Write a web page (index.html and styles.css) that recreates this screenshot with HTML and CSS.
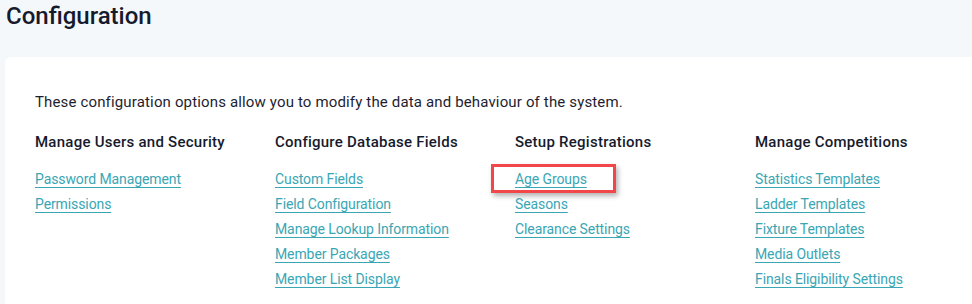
FILE: index.html
```html
<!DOCTYPE html>
<html>
<head>
<meta charset="utf-8">
<link rel="stylesheet" href="styles.css">
</head>
<body>
<h1 class="title">Configuration</h1>
<div class="card">
  <p class="intro">These configuration options allow you to modify the data and behaviour of the system.</p>
  <div class="cols">
    <div class="col">
      <h2 class="heading">Manage Users and Security</h2>
      <ul class="links">
        <li><a href="#">Password Management</a></li>
        <li><a href="#">Permissions</a></li>
      </ul>
    </div>
    <div class="col">
      <h2 class="heading">Configure Database Fields</h2>
      <ul class="links">
        <li><a href="#">Custom Fields</a></li>
        <li><a href="#">Field Configuration</a></li>
        <li><a href="#">Manage Lookup Information</a></li>
        <li><a href="#">Member Packages</a></li>
        <li><a href="#">Member List Display</a></li>
      </ul>
    </div>
    <div class="col">
      <h2 class="heading">Setup Registrations</h2>
      <ul class="links">
        <li class="highlight"><a href="#">Age Groups</a></li>
        <li><a href="#">Seasons</a></li>
        <li><a href="#">Clearance Settings</a></li>
      </ul>
    </div>
    <div class="col">
      <h2 class="heading">Manage Competitions</h2>
      <ul class="links">
        <li><a href="#">Statistics Templates</a></li>
        <li><a href="#">Ladder Templates</a></li>
        <li><a href="#">Fixture Templates</a></li>
        <li><a href="#">Media Outlets</a></li>
        <li><a href="#">Finals Eligibility Settings</a></li>
      </ul>
    </div>
  </div>
</div>
</body>
</html>
```

FILE: styles.css
```css
html, body {
  margin: 0;
  padding: 0;
}
body {
  background: #f5f8fb;
  font-family: Roboto, "Liberation Sans", sans-serif;
  color: #1b1b2f;
  width: 972px;
  height: 304px;
  overflow: hidden;
}
.title {
  margin: 0;
  padding: 2px 0 0 6px;
  font-family: Roboto, sans-serif;
  font-weight: 500;
  font-size: 24px;
  line-height: 28px;
  color: #161a2d;
}
.card {
  box-sizing: border-box;
  background: #fff;
  margin: 27px 0 0 5px;
  border-radius: 6px 0 0 0;
  padding: 35px 0 0 30px;
  height: 252px;
}
.intro {
  margin: 0;
  font-size: 15px;
  line-height: 20px;
  letter-spacing: 0.15px;
  color: #1e1e30;
}
.cols {
  display: grid;
  grid-template-columns: repeat(4, 240px);
  margin-top: 20px;
}
.heading {
  margin: 0;
  font-size: 15px;
  font-weight: 500;
  line-height: 20px;
  color: #161a2d;
  letter-spacing: 0.25px;
}
.links {
  list-style: none;
  margin: 14px 0 0;
  padding: 0;
}
.links li {
  line-height: 25px;
  height: 25px;
  position: relative;
}
.links a {
  font-size: 14px;
  letter-spacing: -0.1px;
  color: #3aa6b4;
  text-decoration: underline;
  text-underline-offset: 3px;
}
.highlight::before {
  content: "";
  position: absolute;
  left: -24px;
  top: -2px;
  width: 119px;
  height: 23px;
  border: 3px solid #f2474a;
  box-shadow: 2px 3px 5px rgba(0, 0, 0, 0.3);
  pointer-events: none;
}
```
